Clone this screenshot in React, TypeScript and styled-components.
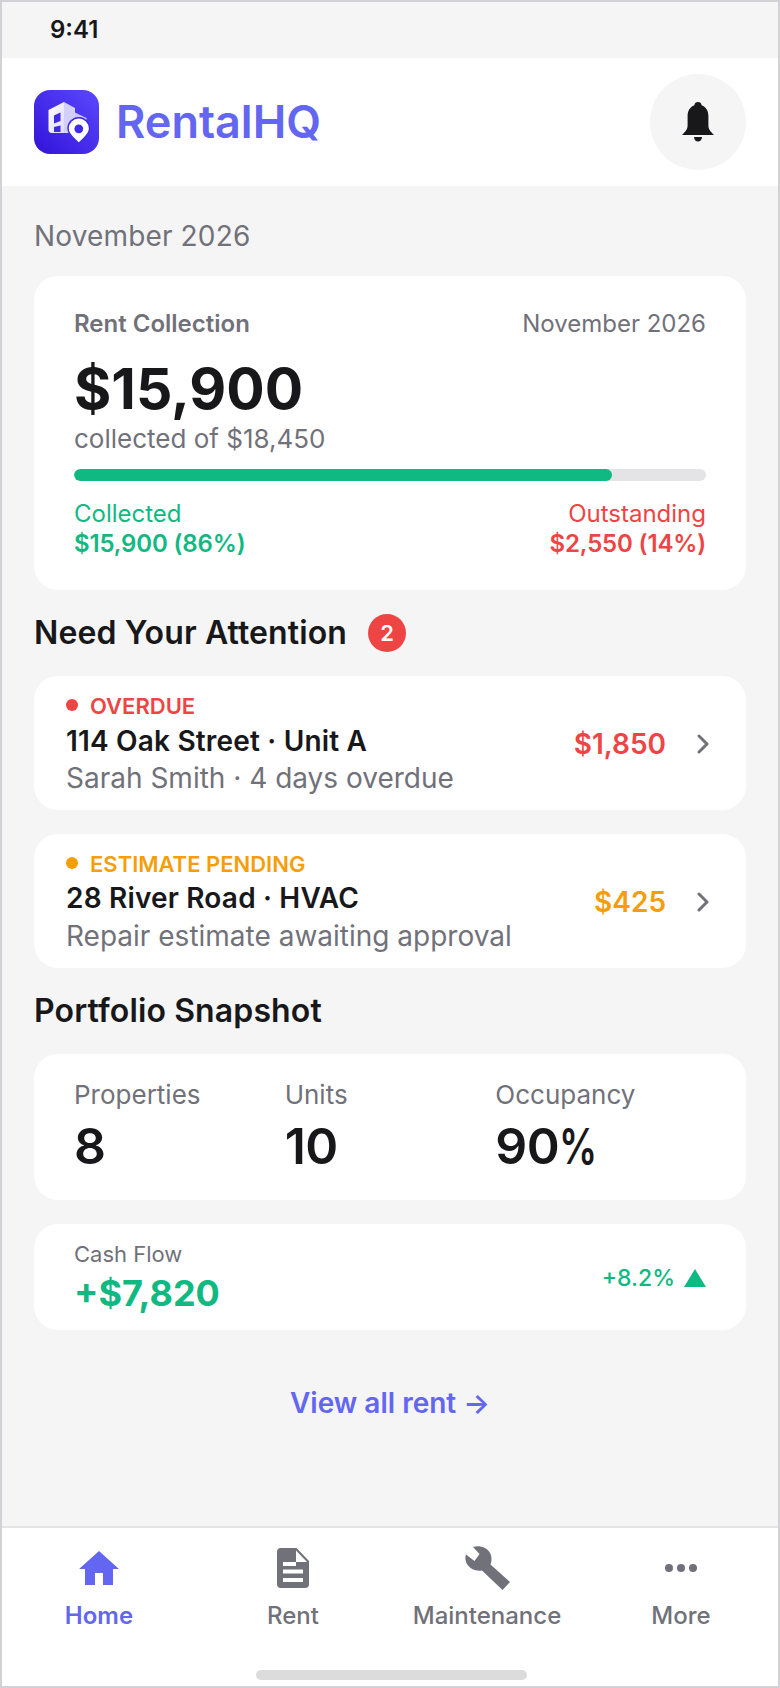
import React from "react";
import styled, { createGlobalStyle } from "styled-components";

const Global = createGlobalStyle`
  html, body { margin: 0; padding: 0; background: #fff; }
  * { box-sizing: border-box; }
  body { font-family: Inter, "Liberation Sans", sans-serif; color: #18181b; }
`;

const Frame = styled.div`
  width: 780px; height: 1688px; border: 2px solid #d1d1d6; background: #f5f5f5;
  display: flex; flex-direction: column; overflow: hidden;
`;
const StatusBar = styled.div`
  height: 56px; flex: none; padding: 13px 0 0 48px;
  font-size: 24px; line-height: 30px; font-weight: 600; color: #18181b;
`;
const Header = styled.header`
  height: 128px; flex: none; background: #fff; display: flex; align-items: center;
  justify-content: space-between; padding: 0 32px 0 32px;
`;
const Brand = styled.div`display: flex; align-items: center; gap: 17px;`;
const BrandName = styled.div`font-size: 45px; line-height: 52px; font-weight: 600; color: #6366f1;`;
const BellButton = styled.div`
  width: 96px; height: 96px; border-radius: 50%; background: #f5f5f5;
  display: flex; align-items: center; justify-content: center;
`;
const Main = styled.main`flex: 1; padding: 0 32px; display: flex; flex-direction: column;`;
const MonthLabel = styled.div`font-size: 28px; line-height: 34px; letter-spacing: 0.15px; color: #71717a; margin-top: 33px;`;
const Card = styled.section`background: #fff; border-radius: 24px;`;
const RentCard = styled(Card)`height: 314px; margin-top: 23px; padding: 33px 40px 0;`;
const RentTop = styled.div`display: flex; justify-content: space-between; align-items: baseline;`;
const RentTitle = styled.div`font-size: 24px; line-height: 30px; font-weight: 600; color: #71717a;`;
const RentMonth = styled.div`font-size: 24px; line-height: 30px; color: #71717a;`;
const BigAmount = styled.div`font-size: 57px; line-height: 64px; font-weight: 700; margin-top: 18px; color: #18181b;`;
const Collected = styled.div`font-size: 26px; line-height: 30px; color: #71717a; margin-top: 3px;`;
const Track = styled.div`height: 12px; border-radius: 6px; background: #e4e4e7; margin-top: 15px; overflow: hidden;`;
const Fill = styled.div`height: 100%; background: #10b981; border-radius: 6px;`;
const Legend = styled.div`display: flex; justify-content: space-between; margin-top: 18px;`;
const LegendCol = styled.div<{ $right?: boolean; $color: string }>`
  text-align: ${(p) => (p.$right ? "right" : "left")}; color: ${(p) => p.$color};
`;
const LegendLabel = styled.div`font-size: 24px; line-height: 30px;`;
const LegendValue = styled.div`font-size: 24px; line-height: 30px; font-weight: 600; letter-spacing: -0.15px;`;
const SectionHead = styled.div<{ $mt: number }>`
  display: flex; align-items: center; gap: 21px; margin-top: ${(p) => p.$mt}px;
`;
const SectionTitle = styled.h2`margin: 0; font-size: 32px; line-height: 40px; font-weight: 600; letter-spacing: 0.12px; color: #18181b;`;
const Badge = styled.span`
  width: 38px; height: 38px; border-radius: 50%; background: #ef4444; color: #fff;
  font-size: 22px; font-weight: 600; display: flex; align-items: center; justify-content: center;
`;
const AlertCard = styled(Card)<{ $mt: number }>`
  height: 134px; margin-top: ${(p) => p.$mt}px; padding: 0 37px 0 32px;
  display: flex; justify-content: space-between; align-items: center;
`;
const AlertBody = styled.div`align-self: flex-start; padding-top: 17px;`;
const Tag = styled.div<{ $color: string }>`
  display: flex; align-items: center; gap: 12px; font-size: 22px; line-height: 27px;
  font-weight: 600; color: ${(p) => p.$color};
`;
const Dot = styled.span<{ $color: string }>`
  width: 12px; height: 12px; border-radius: 50%; background: ${(p) => p.$color}; margin-top: -3px;
`;
const AlertTitle = styled.div<{ $mt: number }>`
  font-size: 28px; line-height: 36px; font-weight: 600; letter-spacing: 0.18px; color: #18181b; margin-top: ${(p) => p.$mt}px;
`;
const AlertSub = styled.div<{ $mt: number }>`font-size: 28px; line-height: 36px; color: #71717a; margin-top: ${(p) => p.$mt}px;`;
const AlertRight = styled.div`display: flex; align-items: center; gap: 31px; padding-top: 2px;`;
const AlertAmount = styled.div<{ $color: string }>`font-size: 28px; line-height: 36px; font-weight: 600; color: ${(p) => p.$color};`;
const StatsCard = styled(Card)`
  height: 146px; margin-top: 23px; padding: 25px 40px 0;
  display: grid; grid-template-columns: repeat(3, 1fr); align-content: start;
`;
const StatLabel = styled.div`font-size: 26px; line-height: 32px; color: #71717a;`;
const StatValue = styled.div`
  font-size: 50px; line-height: 58px; font-weight: 600; letter-spacing: -0.5px; color: #18181b; margin-top: 6px;
`;
const PercentSign = styled.span`display: inline-block; transform: scaleX(0.76); transform-origin: left center;`;
const CashCard = styled(Card)`
  height: 106px; margin-top: 24px; padding: 16px 40px 0 40px; display: flex; justify-content: space-between;
`;
const CashLabel = styled.div`font-size: 22px; line-height: 28px; color: #71717a;`;
const CashValue = styled.div`font-size: 36px; line-height: 44px; font-weight: 700; color: #10b981; margin-top: 3px;`;
const Trend = styled.div`
  display: flex; align-items: center; gap: 9px; font-size: 23px; line-height: 28px;
  font-weight: 500; color: #10b981; height: 28px; margin-top: 24px;
`;
const ViewAll = styled.div`
  font-size: 28px; line-height: 36px; font-weight: 600; color: #6366f1; text-align: center; margin-top: 55px;
`;
const Nav = styled.nav`
  height: 160px; flex: none; background: #fff; border-top: 2px solid #e4e4e7; position: relative;
  display: grid; grid-template-columns: repeat(4, 1fr); align-items: start; padding-top: 16px;
`;
const NavItem = styled.div<{ $active?: boolean }>`
  display: flex; flex-direction: column; align-items: center;
  color: ${(p) => (p.$active ? "#6366f1" : "#71717a")};
`;
const NavIcon = styled.div`height: 48px; display: flex; align-items: center; justify-content: center;`;
const NavLabel = styled.div<{ $active?: boolean }>`
  font-size: 24px; line-height: 30px; font-weight: ${(p) => (p.$active ? 600 : 500)}; margin-top: 9px;
`;
const HomeIndicator = styled.div`
  position: absolute; left: 254px; bottom: 6px; width: 271px; height: 10px; border-radius: 5px; background: #dcdcdc;
`;

const Logo = () => (
  <svg width="65" height="64" viewBox="0 0 65 64">
    <defs>
      <linearGradient id="lg" x1="1" y1="0" x2="0" y2="1">
        <stop offset="0" stopColor="#5b48ff" /><stop offset="1" stopColor="#3213d8" />
      </linearGradient>
      <linearGradient id="wall" x1="0" y1="0" x2="1" y2="1">
        <stop offset="0" stopColor="#ffffff" /><stop offset="1" stopColor="#dedbfb" />
      </linearGradient>
    </defs>
    <rect width="65" height="64" rx="16" fill="url(#lg)" />
    <path d="M41 22.5 L52.5 28 V42 H41 Z" fill="#c9c4fb" />
    <path d="M30 12 L41 18 V43 H30 Z" fill="#d3cffb" />
    <path d="M14.5 20 L30 12 V43 L18 43 Q14.5 43 14.5 39.5 Z" fill="url(#wall)" />
    <path d="M20 25.5 L26.5 22.5 V31 L20 33.5 Z" fill="#3f2ae6" />
    <path d="M20 37 L26.5 35.5 V42 L20 42 Z" fill="#3f2ae6" />
    <path d="M44.8 53.5 C40.5 48.5 34 45 34 38.5 A10.8 10.8 0 0 1 55.6 38.5 C55.6 45 49.1 48.5 44.8 53.5 Z" fill="#fff" stroke="#3f2ae6" strokeWidth="1.5" />
    <circle cx="44.8" cy="38.8" r="4.4" fill="#3f2ae6" />
  </svg>
);

const Bell = () => (
  <svg width="32" height="40" viewBox="0 0 32 40" fill="#18181b">
    <path d="M16 0 C18 0 19.4 1.2 19.6 3.2 C24.4 5 26.4 9 26.4 14 V23 C26.4 27 27.6 28.5 32 33 H0 C4.4 28.5 5.6 27 5.6 23 V14 C5.6 9 7.6 5 12.4 3.2 C12.6 1.2 14 0 16 0 Z" />
    <path d="M12 35 H20 C19.8 38 18 39.5 16 39.5 C14 39.5 12.2 38 12 35 Z" />
  </svg>
);

const Chevron = () => (
  <svg width="12" height="20" viewBox="0 0 12 20" fill="none" stroke="#71717a" strokeWidth="3" strokeLinecap="round" strokeLinejoin="round">
    <path d="M2 2 L10 10 L2 18" />
  </svg>
);

const HomeIcon = () => (
  <svg width="40" height="34" viewBox="0 0 40 34" fill="#6366f1">
    <path d="M20 0 L40 18 H34 V34 H24 V22 H16 V34 H6 V18 H0 Z" />
  </svg>
);

const DocIcon = () => (
  <svg width="32" height="40" viewBox="0 0 32 40">
    <path d="M4 0 H19.5 L32 13 V36 Q32 40 28 40 H4 Q0 40 0 36 V4 Q0 0 4 0 Z" fill="#71717a" />
    <path d="M19 2.5 L30 14 H19 V18 H6 V14 H19 Z" fill="#fff" />
    <rect x="6" y="21.5" width="20" height="4" fill="#fff" />
    <rect x="6" y="30" width="20" height="4" fill="#fff" />
  </svg>
);

const WrenchIcon = () => (
  <svg width="45" height="44" viewBox="0 0 45 44" fill="#71717a">
    <path d="M8 1 C14 -1 21 1 24.5 6 C27 10 27 15 25.5 18.5 L45 36 L37.5 44 L17 24.5 C11 25.5 5 23 2 18 C0 14 0 11 1 8.5 L9.5 15 L14.5 8 Z" />
  </svg>
);

const DotsIcon = () => (
  <svg width="32" height="10" viewBox="0 0 32 10" fill="#71717a">
    <circle cx="4" cy="5" r="4" /><circle cx="16" cy="5" r="4" /><circle cx="28" cy="5" r="4" />
  </svg>
);

const ArrowUp = () => (
  <svg width="22" height="18" viewBox="0 0 22 18" fill="#10b981"><path d="M11 0 L22 18 H0 Z" /></svg>
);

export default function App() {
  return (
    <>
      <Global />
      <Frame>
        <StatusBar>9:41</StatusBar>
        <Header>
          <Brand>
            <Logo />
            <BrandName>RentalHQ</BrandName>
          </Brand>
          <BellButton><Bell /></BellButton>
        </Header>
        <Main>
          <MonthLabel>November 2026</MonthLabel>
          <RentCard>
            <RentTop>
              <RentTitle>Rent Collection</RentTitle>
              <RentMonth>November 2026</RentMonth>
            </RentTop>
            <BigAmount>$15,900</BigAmount>
            <Collected>collected of $18,450</Collected>
            <Track><Fill style={{ width: "85.2%" }} /></Track>
            <Legend>
              <LegendCol $color="#10b981">
                <LegendLabel>Collected</LegendLabel>
                <LegendValue>$15,900 (86%)</LegendValue>
              </LegendCol>
              <LegendCol $right $color="#ef4444">
                <LegendLabel>Outstanding</LegendLabel>
                <LegendValue>$2,550 (14%)</LegendValue>
              </LegendCol>
            </Legend>
          </RentCard>
          <SectionHead $mt={23}>
            <SectionTitle>Need Your Attention</SectionTitle>
            <Badge>2</Badge>
          </SectionHead>
          <AlertCard $mt={23}>
            <AlertBody>
              <Tag $color="#ef4444"><Dot $color="#ef4444" />OVERDUE</Tag>
              <AlertTitle $mt={3}>114 Oak Street · Unit A</AlertTitle>
              <AlertSub $mt={1}>Sarah Smith · 4 days overdue</AlertSub>
            </AlertBody>
            <AlertRight>
              <AlertAmount $color="#ef4444">$1,850</AlertAmount>
              <Chevron />
            </AlertRight>
          </AlertCard>
          <AlertCard $mt={24}>
            <AlertBody>
              <Tag $color="#f59e0b"><Dot $color="#f59e0b" />ESTIMATE PENDING</Tag>
              <AlertTitle $mt={2}>28 River Road · HVAC</AlertTitle>
              <AlertSub $mt={2}>Repair estimate awaiting approval</AlertSub>
            </AlertBody>
            <AlertRight>
              <AlertAmount $color="#f59e0b">$425</AlertAmount>
              <Chevron />
            </AlertRight>
          </AlertCard>
          <SectionHead $mt={23}>
            <SectionTitle>Portfolio Snapshot</SectionTitle>
          </SectionHead>
          <StatsCard>
            <div><StatLabel>Properties</StatLabel><StatValue>8</StatValue></div>
            <div><StatLabel>Units</StatLabel><StatValue>10</StatValue></div>
            <div><StatLabel>Occupancy</StatLabel><StatValue>90<PercentSign>%</PercentSign></StatValue></div>
          </StatsCard>
          <CashCard>
            <div><CashLabel>Cash Flow</CashLabel><CashValue>+$7,820</CashValue></div>
            <Trend>+8.2% <ArrowUp /></Trend>
          </CashCard>
          <ViewAll>View all rent →</ViewAll>
        </Main>
        <Nav>
          <NavItem $active>
            <NavIcon><HomeIcon /></NavIcon>
            <NavLabel $active>Home</NavLabel>
          </NavItem>
          <NavItem>
            <NavIcon><DocIcon /></NavIcon>
            <NavLabel>Rent</NavLabel>
          </NavItem>
          <NavItem>
            <NavIcon><WrenchIcon /></NavIcon>
            <NavLabel>Maintenance</NavLabel>
          </NavItem>
          <NavItem>
            <NavIcon><DotsIcon /></NavIcon>
            <NavLabel>More</NavLabel>
          </NavItem>
          <HomeIndicator />
        </Nav>
      </Frame>
    </>
  );
}
